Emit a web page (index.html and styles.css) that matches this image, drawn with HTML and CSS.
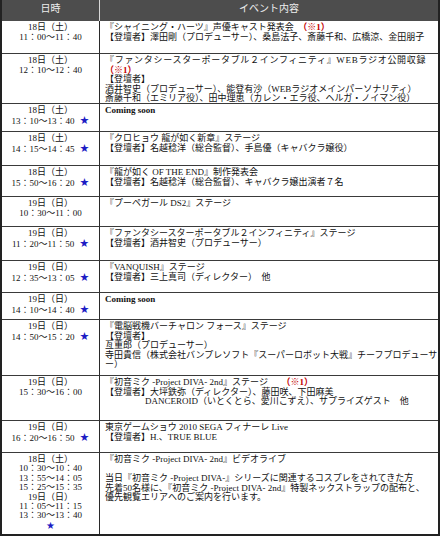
FILE: index.html
```html
<!DOCTYPE html>
<html lang="ja">
<head>
<meta charset="utf-8">
<title>イベントスケジュール</title>
<link rel="stylesheet" href="styles.css">
</head>
<body>
<div class="tbl">
  <div class="hd hd-date">日時</div>
  <div class="hd">イベント内容</div>

  <div class="c d">18日（土）<br>11：00〜11：40</div>
  <div class="c e">『シャイニング・ハーツ』声優キャスト発表会　<span class="note">（※1）</span><br>【登壇者】澤田剛（プロデューサー）、桑島法子、斎藤千和、広橋涼、金田朋子</div>

  <div class="c d">18日（土）<br>12：10〜12：40</div>
  <div class="c e"><span class="wide">『ファンタシースターポータブル２インフィニティ』WEBラジオ公開収録</span><br><span class="note">（※1）</span><br>【登壇者】<br>酒井智史（プロデューサー）、能登有沙（WEBラジオメインパーソナリティ）<br>斎藤千和（エミリア役）、田中理恵（カレン・エラ役、ヘルガ・ノイマン役）</div>

  <div class="c d">18日（土）<br>13：10〜13：40<span class="star">★</span></div>
  <div class="c e"><span class="soon">Coming soon</span></div>

  <div class="c d">18日（土）<br>14：15〜14：45<span class="star">★</span></div>
  <div class="c e">『クロヒョウ 龍が如く新章』ステージ<br>【登壇者】名越稔洋（総合監督）、手島優（キャバクラ嬢役）</div>

  <div class="c d">18日（土）<br>15：50〜16：20<span class="star">★</span></div>
  <div class="c e">『龍が如く OF THE END』制作発表会<br>【登壇者】名越稔洋（総合監督）、キャバクラ嬢出演者７名</div>

  <div class="c d">19日（日）<br>10：30〜11：00</div>
  <div class="c e">『プーペガール DS2』ステージ</div>

  <div class="c d">19日（日）<br>11：20〜11：50<span class="star">★</span></div>
  <div class="c e">『ファンタシースターポータブル２インフィニティ』ステージ<br>【登壇者】酒井智史（プロデューサー）</div>

  <div class="c d">19日（日）<br>12：35〜13：05<span class="star">★</span></div>
  <div class="c e">『VANQUISH』ステージ<br>【登壇者】三上真司（ディレクター）　他</div>

  <div class="c d">19日（日）<br>14：10〜14：40<span class="star">★</span></div>
  <div class="c e"><span class="soon">Coming soon</span></div>

  <div class="c d">19日（日）<br>14：50〜15：20<span class="star">★</span></div>
  <div class="c e">『電脳戦機バーチャロン フォース』ステージ<br>【登壇者】<br>亙重郎（プロデューサー）<br>寺田貴信（株式会社バンプレソフト『スーパーロボット大戦』チーフプロデューサ<br>ー）</div>

  <div class="c d">19日（日）<br>15：30〜16：00</div>
  <div class="c e">『初音ミク -Project DIVA- 2nd』ステージ　　<span class="note">（※1）</span><br>【登壇者】大坪鉄弥（ディレクター）、藤田咲、下田麻美<br><span class="indent">DANCEROID（いとくとら、愛川こずえ）、サプライズゲスト　他</span></div>

  <div class="c d">19日（日）<br>16：20〜16：50<span class="star">★</span></div>
  <div class="c e">東京ゲームショウ 2010 SEGA フィナーレ Live<br>【登壇者】H.、TRUE BLUE</div>

  <div class="c d d-last">18日（土）<br>10：30〜10：40<br>13：55〜14：05<br>15：25〜15：35<br>19日（日）<br>11：05〜11：15<br>13：30〜13：40<br><span class="star star-solo">★</span></div>
  <div class="c e">『初音ミク -Project DIVA- 2nd』ビデオライブ<br><br>当日『初音ミク -Project DIVA-』シリーズに関連するコスプレをされてきた方<br>先着50名様に、『初音ミク -Project DIVA- 2nd』特製ネックストラップの配布と、<br>優先観覧エリアへのご案内を行います。</div>
</div>
</body>
</html>
```

FILE: styles.css
```css
html, body {
  margin: 0;
  padding: 0;
  background: #ffffff;
}

.tbl {
  display: grid;
  grid-template-columns: 98px 1fr;
  grid-template-rows: 21px 33px 50px 28px 34px 31px 30px 34px 32px 27px 56px 45px 32px 81px;
  width: 440px;
  height: 536px;
  box-sizing: border-box;
  border: 2px solid #222222;
  border-top: 0;
  font-family: "Liberation Serif", "Noto Sans CJK JP", serif;
  font-size: 9px;
  line-height: 9.5px;
  color: #111111;
  overflow: hidden;
}

.hd {
  background: #4d4d4d;
  color: #eeeeee;
  text-align: center;
  font-size: 10px;
  line-height: 11px;
  padding-top: 2px;
  box-sizing: border-box;
  font-family: "Noto Sans CJK JP", sans-serif;
}

.hd-date {
  border-right: 1px solid #d8d8d8;
}

.c {
  box-sizing: border-box;
  border-bottom: 1px solid #3a3a3a;
  padding-top: 2px;
  overflow: hidden;
  white-space: nowrap;
}

.c:nth-last-child(-n+2) {
  border-bottom: 0;
}

.d {
  border-right: 1px solid #2a2a2a;
  text-align: center;
}

.d-last {
  line-height: 9.4px;
  padding-top: 2px;
}

.e {
  padding-left: 5px;
}

.wide {
  letter-spacing: 0.7px;
}

.star {
  color: #1c1cc4;
  margin-left: 5px;
  font-family: "DejaVu Sans", sans-serif;
  font-size: 11px;
}

.star-solo {
  margin-left: 0;
  font-size: 10px;
}

.note {
  color: #c40000;
  font-weight: bold;
}

.soon {
  font-weight: bold;
}

.indent {
  padding-left: 40px;
}
```
